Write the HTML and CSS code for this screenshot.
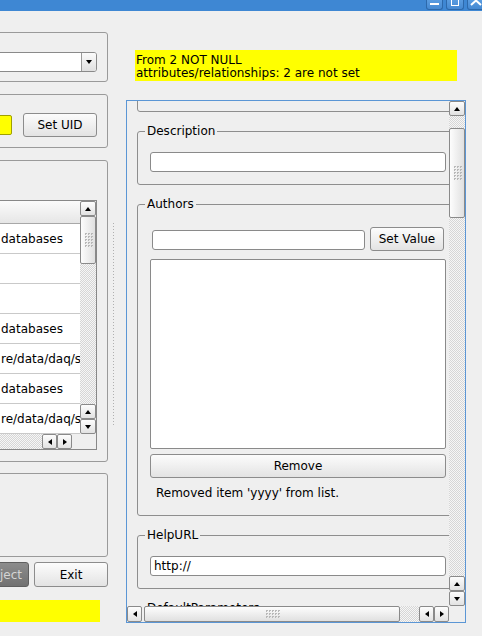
FILE: index.html
```html
<!DOCTYPE html>
<html>
<head>
<meta charset="utf-8">
<link rel="stylesheet" href="styles.css">
</head>
<body>
<div class="titlebar">
  <div class="wbtns">
    <div class="wbtn"><span class="i-min"></span></div>
    <div class="wbtn"><span class="i-max"></span></div>
    <div class="wbtn wclose"><svg width="12" height="6" viewBox="0 0 12 6"><path d="M1 5 L6 0.5 L11 5" stroke="#fff" stroke-width="2" fill="none"/></svg></div>
  </div>
</div>
<div class="main">
  <div class="leftcol">
    <div class="box box1">
      <div class="combo"><div class="combo-field"></div><div class="combo-btn"><span class="tri tri-down"></span></div></div>
    </div>
    <div class="box box2">
      <div class="uid-field"></div>
      <button class="btn setuid">Set UID</button>
    </div>
    <div class="box box3">
      <div class="table">
        <div class="tbody">
          <div class="thead"></div>
          <div class="row"><span>databases</span></div>
          <div class="row"><span></span></div>
          <div class="row"><span></span></div>
          <div class="row"><span>databases</span></div>
          <div class="row"><span>re/data/daq/sw/repository</span></div>
          <div class="row"><span>databases</span></div>
          <div class="row"><span>re/data/daq/sw/repository</span></div>
        </div>
        <div class="vbar">
          <div class="sb-btn"><span class="tri tri-up"></span></div>
          <div class="slider-v small"><span class="grip"></span></div>
          <div class="track"></div>
          <div class="sb-btn"><span class="tri tri-up"></span></div>
          <div class="sb-btn"><span class="tri tri-down"></span></div>
        </div>
        <div class="hbar">
          <div class="track"></div>
          <div class="sb-btn-h"><span class="tri tri-left"></span></div>
          <div class="sb-btn-h"><span class="tri tri-right"></span></div>
          <div class="hgap"></div>
        </div>
        <div class="corner"></div>
      </div>
    </div>
    <div class="box box4"></div>
    <div class="actions">
      <button class="btn dark">Update Object</button>
      <button class="btn exit">Exit</button>
    </div>
    <div class="status-yellow"></div>
  </div>
  <div class="splitter"><div class="grip-v"></div></div>
  <div class="rightcol">
    <div class="notice">From 2 NOT NULL<br>attributes/relationships: 2 are not set</div>
    <div class="scrollarea">
      <div class="viewport">
        <div class="content">
          <div class="prev"></div>
          <fieldset class="group">
            <legend>Description</legend>
            <div class="input"></div>
          </fieldset>
          <fieldset class="group authors">
            <legend>Authors</legend>
            <div class="setrow">
              <div class="input small-input"></div>
              <button class="btn setval">Set Value</button>
            </div>
            <div class="listbox"></div>
            <button class="btn remove">Remove</button>
            <div class="msg">Removed item 'yyyy' from list.</div>
          </fieldset>
          <fieldset class="group">
            <legend>HelpURL</legend>
            <div class="input">http://</div>
          </fieldset>
          <fieldset class="group">
            <legend>DefaultParameters</legend>
            <div class="input"></div>
          </fieldset>
        </div>
      </div>
      <div class="vbar big">
        <div class="sb-btn"><span class="tri tri-up"></span></div>
        <div class="track top-track"></div>
        <div class="slider-v large"><span class="grip"></span></div>
        <div class="track"></div>
        <div class="sb-btn"><span class="tri tri-up"></span></div>
        <div class="sb-btn"><span class="tri tri-down"></span></div>
      </div>
      <div class="hbar big">
        <div class="sb-btn-h"><span class="tri tri-left"></span></div>
        <div class="slider-h"><span class="grip"></span></div>
        <div class="track"></div>
        <div class="sb-btn-h"><span class="tri tri-left"></span></div>
        <div class="sb-btn-h"><span class="tri tri-right"></span></div>
      </div>
      <div class="corner"></div>
    </div>
  </div>
</div>
</body>
</html>
```
FILE: styles.css
```css
* { box-sizing: border-box; }
html, body { margin: 0; padding: 0; }
body {
  width: 482px;
  height: 636px;
  overflow: hidden;
  background: #efefef;
  font-family: "DejaVu Sans", sans-serif;
  font-size: 12px;
  color: #000;
}

/* title bar */
.titlebar {
  height: 11px;
  background: #3e87d3;
  display: flex;
  justify-content: flex-end;
  align-items: flex-start;
  overflow: hidden;
}
.wbtns { display: flex; gap: 3px; margin-right: -3px; }
.wbtn {
  width: 17px;
  height: 10px;
  border: 1px solid #2d69ab;
  border-top: none;
  border-radius: 0 0 3px 3px;
  background: linear-gradient(#5a9ce0, #4589d2);
  display: flex;
  align-items: flex-end;
  justify-content: center;
}
.wbtn + .wbtn { width: 18px; }
.i-min { width: 9px; height: 2px; background: #fff; margin-bottom: 4px; }
.i-max { width: 8px; height: 7px; border: 1px solid #fff; border-top: none; margin-bottom: 3px; }
.wclose { width: 20px; }
.wclose svg { margin-bottom: 3px; }

/* layout */
.main { display: flex; height: 625px; }
.leftcol {
  margin-left: -92px;
  width: 200px;
  flex: none;
  display: flex;
  flex-direction: column;
  padding-top: 21px;
}
.box { border: 1px solid #9a9a9a; border-radius: 3px; flex: none; }

.box1 { height: 50px; padding: 19px 10px 0 0; }
.combo {
  height: 20px;
  display: flex;
  border: 1px solid #8a8a8a;
  border-radius: 3px;
  background: #fff;
  overflow: hidden;
}
.combo-field { flex: 1; }
.combo-btn {
  width: 15px;
  border-left: 1px solid #9a9a9a;
  background: linear-gradient(#fbfbfb, #e0e0e0);
  display: flex;
  align-items: center;
  justify-content: center;
}

.box2 {
  margin-top: 12px;
  height: 54px;
  display: flex;
  align-items: flex-start;
  padding: 18px 10px 0 0;
}
.uid-field {
  flex: 1;
  height: 20px;
  margin-top: 2px;
  background: #ffff00;
  border: 1px solid #a0a000;
  border-radius: 2px;
}
.btn {
  font-family: "DejaVu Sans", sans-serif;
  font-size: 12px;
  color: #000;
  height: 24px;
  border: 1px solid #8c8c8c;
  border-radius: 3px;
  background: linear-gradient(#fcfcfc, #e3e3e3);
  padding: 0;
  margin: 0;
}
.setuid { width: 74px; margin-left: 11px; }

.box3 {
  margin-top: 12px;
  height: 302px;
  padding: 39px 10px 0 0;
}
.table {
  height: 250px;
  border: 1px solid #888;
  background: #fff;
  display: grid;
  grid-template-columns: 1fr 16px;
  grid-template-rows: 1fr 15px;
  overflow: hidden;
}
.tbody { display: flex; flex-direction: column; overflow: hidden; }
.thead {
  height: 23px;
  flex: none;
  background: linear-gradient(#fbfbfb, #e6e6e6);
  border-bottom: 1px solid #a8a8a8;
}
.row {
  height: 30px;
  flex: none;
  border-bottom: 1px solid #c9c9c9;
  display: flex;
  align-items: center;
  padding-left: 91px;
  white-space: nowrap;
  overflow: hidden;
}

.vbar { display: flex; flex-direction: column; background: #efefef; }
.hbar { display: flex; flex-direction: row; background: #efefef; }
.corner { background: #efefef; }
.sb-btn {
  height: 15px;
  flex: none;
  border: 1px solid #8a8a8a;
  border-radius: 2px;
  background: linear-gradient(#fdfdfd, #e2e2e2);
  display: flex;
  align-items: center;
  justify-content: center;
}
.sb-btn-h {
  width: 15px;
  flex: none;
  border: 1px solid #8a8a8a;
  border-radius: 2px;
  background: linear-gradient(#fdfdfd, #e2e2e2);
  display: flex;
  align-items: center;
  justify-content: center;
}
.track {
  flex: 1;
  background: repeating-conic-gradient(#d6d6d6 0% 25%, #f6f6f6 0% 50%) 0 0 / 2px 2px;
}
.top-track { flex: none; height: 12px; }
.slider-v {
  flex: none;
  border: 1px solid #8a8a8a;
  border-radius: 2px;
  background: linear-gradient(90deg, #fdfdfd, #e0e0e0);
  display: flex;
  align-items: center;
  justify-content: center;
}
.slider-v.small { height: 48px; }
.slider-v.large { height: 90px; }
.slider-h {
  flex: none;
  width: 256px;
  margin-left: 2px;
  border: 1px solid #8a8a8a;
  border-radius: 2px;
  background: linear-gradient(#fdfdfd, #e0e0e0);
  display: flex;
  align-items: center;
  justify-content: center;
}
.grip {
  width: 9px;
  height: 14px;
  background: repeating-conic-gradient(#b8b8b8 0% 25%, transparent 0% 100%) 0 0 / 3px 3px;
}
.slider-h .grip { width: 15px; height: 8px; }
.hgap { width: 8px; flex: none; }

.tri { width: 0; height: 0; display: block; }
.tri-up { border-left: 3.5px solid transparent; border-right: 3.5px solid transparent; border-bottom: 4px solid #000; }
.tri-down { border-left: 3.5px solid transparent; border-right: 3.5px solid transparent; border-top: 4px solid #000; }
.tri-left { border-top: 3.5px solid transparent; border-bottom: 3.5px solid transparent; border-right: 4px solid #000; }
.tri-right { border-top: 3.5px solid transparent; border-bottom: 3.5px solid transparent; border-left: 4px solid #000; }

.box4 { margin-top: 11px; height: 84px; }
.actions {
  margin-top: 5px;
  display: flex;
  gap: 5px;
  height: 25px;
}
.dark {
  flex: 1;
  height: 25px;
  background: linear-gradient(#8c8c8c, #717171);
  border-color: #5f5f5f;
  color: #d4d4d4;
  text-align: right;
  padding-right: 6px;
}
.exit { width: 74px; height: 25px; flex: none; }
.status-yellow {
  margin-top: 13px;
  width: 192px;
  height: 22px;
  background: #ffff00;
}

/* splitter */
.splitter {
  width: 18px;
  flex: none;
  display: flex;
  align-items: center;
  padding-left: 5px;
}
.grip-v {
  width: 1px;
  height: 202px;
  background: repeating-linear-gradient(#b0b0b0 0 1px, transparent 1px 3px);
}

/* right column */
.rightcol { width: 340px; flex: none; padding-top: 39px; }
.notice {
  margin-left: 9px;
  width: 322px;
  height: 31px;
  background: #ffff00;
  padding: 4px 1px 0;
  line-height: 13px;
  white-space: nowrap;
}
.scrollarea {
  margin-top: 19px;
  width: 340px;
  height: 523px;
  border: 1px solid #5b96d5;
  display: grid;
  grid-template-columns: 1fr 16px;
  grid-template-rows: 1fr 16px;
}
.viewport { overflow: hidden; }
.content {
  display: flex;
  flex-direction: column;
  gap: 12px;
  padding-left: 10px;
  width: 342px;
}
.prev {
  height: 31px;
  margin-top: -20px;
  width: 322px;
  flex: none;
  border: 1px solid #8e8e8e;
  border-radius: 3px;
}
.group {
  margin: 0;
  width: 322px;
  flex: none;
  padding: 14px 12px 12px;
  border: 1px solid #8e8e8e;
  border-radius: 3px;
  min-inline-size: 0;
}
.group legend {
  padding: 0 2px;
  margin-left: -5px;
  line-height: 14px;
}
.input {
  height: 20px;
  background: #fff;
  border: 1px solid #8a8a8a;
  border-radius: 3px;
  padding: 0 3px;
  line-height: 18px;
}
.authors { padding-top: 16px; padding-bottom: 15px; }
.setrow { display: flex; gap: 5px; margin: 0 2px; align-items: flex-start; }
.small-input { flex: 1; margin-top: 3px; }
.setval { width: 74px; flex: none; }
.listbox {
  margin-top: 8px;
  height: 190px;
  background: #fff;
  border: 1px solid #8a8a8a;
  border-radius: 2px;
}
.remove { width: 100%; margin-top: 5px; display: block; }
.msg { margin-top: 8px; padding-left: 6px; line-height: 14px; }
```
